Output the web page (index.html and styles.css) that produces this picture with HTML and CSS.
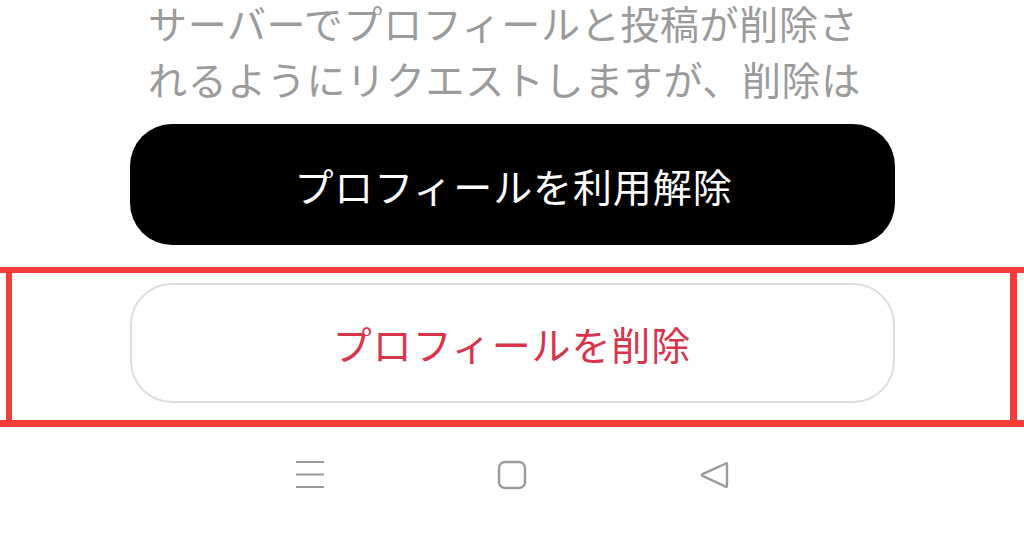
FILE: index.html
```html
<!DOCTYPE html>
<html lang="ja">
<head>
<meta charset="utf-8">
<link rel="stylesheet" href="styles.css">
</head>
<body>
<div class="page">
  <p class="desc">サーバーでプロフィールと投稿が削除されるようにリクエストしますが、削除は</p>
  <div class="btn-row">
    <button class="btn btn-black">プロフィールを利用解除</button>
  </div>
  <div class="highlight">
    <div class="highlight-inner">
      <button class="btn btn-outline">プロフィールを削除</button>
    </div>
  </div>
  <nav class="navbar">
    <svg class="nav-icon" width="30" height="30" viewBox="0 0 30 30">
      <path d="M1 2h28M1 14.5h28M1 27h28" stroke="#9a9a9a" stroke-width="2.2" fill="none"/>
    </svg>
    <svg class="nav-icon" width="30" height="30" viewBox="0 0 30 30">
      <rect x="2" y="2" width="26" height="26" rx="6" stroke="#9a9a9a" stroke-width="2.4" fill="none"/>
    </svg>
    <svg class="nav-icon" width="30" height="30" viewBox="0 0 30 30">
      <path d="M27 3.5 Q28 2.5 28 4.5 V25.5 Q28 27.5 26.5 26.5 L3.5 15.8 Q2 15 3.5 14.2 Z" stroke="#9a9a9a" stroke-width="2.4" fill="none" stroke-linejoin="round"/>
    </svg>
  </nav>
</div>
</body>
</html>
```
FILE: styles.css
```css
* { box-sizing: border-box; }
html, body {
  margin: 0;
  padding: 0;
  background: #ffffff;
}
body {
  width: 1024px;
  height: 538px;
  overflow: hidden;
  font-family: "Noto Sans CJK JP", "Noto Sans", sans-serif;
}
.page {
  display: flex;
  flex-direction: column;
}
.desc {
  margin: -6px 0 0 148px;
  width: 730px;
  font-size: 39px;
  line-height: 56px;
  color: #9b9b9b;
  letter-spacing: 0.65px;
}
.btn-row {
  display: flex;
  justify-content: center;
  margin-top: 18px;
}
.btn {
  font-family: "Noto Sans CJK JP", "Noto Sans", sans-serif;
  font-size: 39px;
  letter-spacing: 0.9px;
  border-radius: 42px;
  display: flex;
  align-items: center;
  justify-content: center;
  cursor: pointer;
  padding: 0;
}
.btn-black {
  width: 765px;
  height: 121px;
  background: #000000;
  color: #ffffff;
  border: none;
  padding-left: 3px;
}
.highlight {
  margin-top: 22px;
  border-top: 6px solid #f63b3b;
  border-bottom: 7px solid #f63b3b;
}
.highlight-inner {
  margin: 0 7px 0 6px;
  border-left: 6px solid #f63b3b;
  border-right: 7px solid #f63b3b;
  padding: 10px 0 17px;
  display: flex;
  justify-content: center;
}
.btn-outline {
  width: 765px;
  height: 120px;
  background: #ffffff;
  color: #d8354a;
  border: 2px solid #dedede;
  margin-left: 2px;
}
.navbar {
  display: flex;
  justify-content: center;
  gap: 172px;
  margin-top: 33px;
}
.nav-icon {
  display: block;
}
```
